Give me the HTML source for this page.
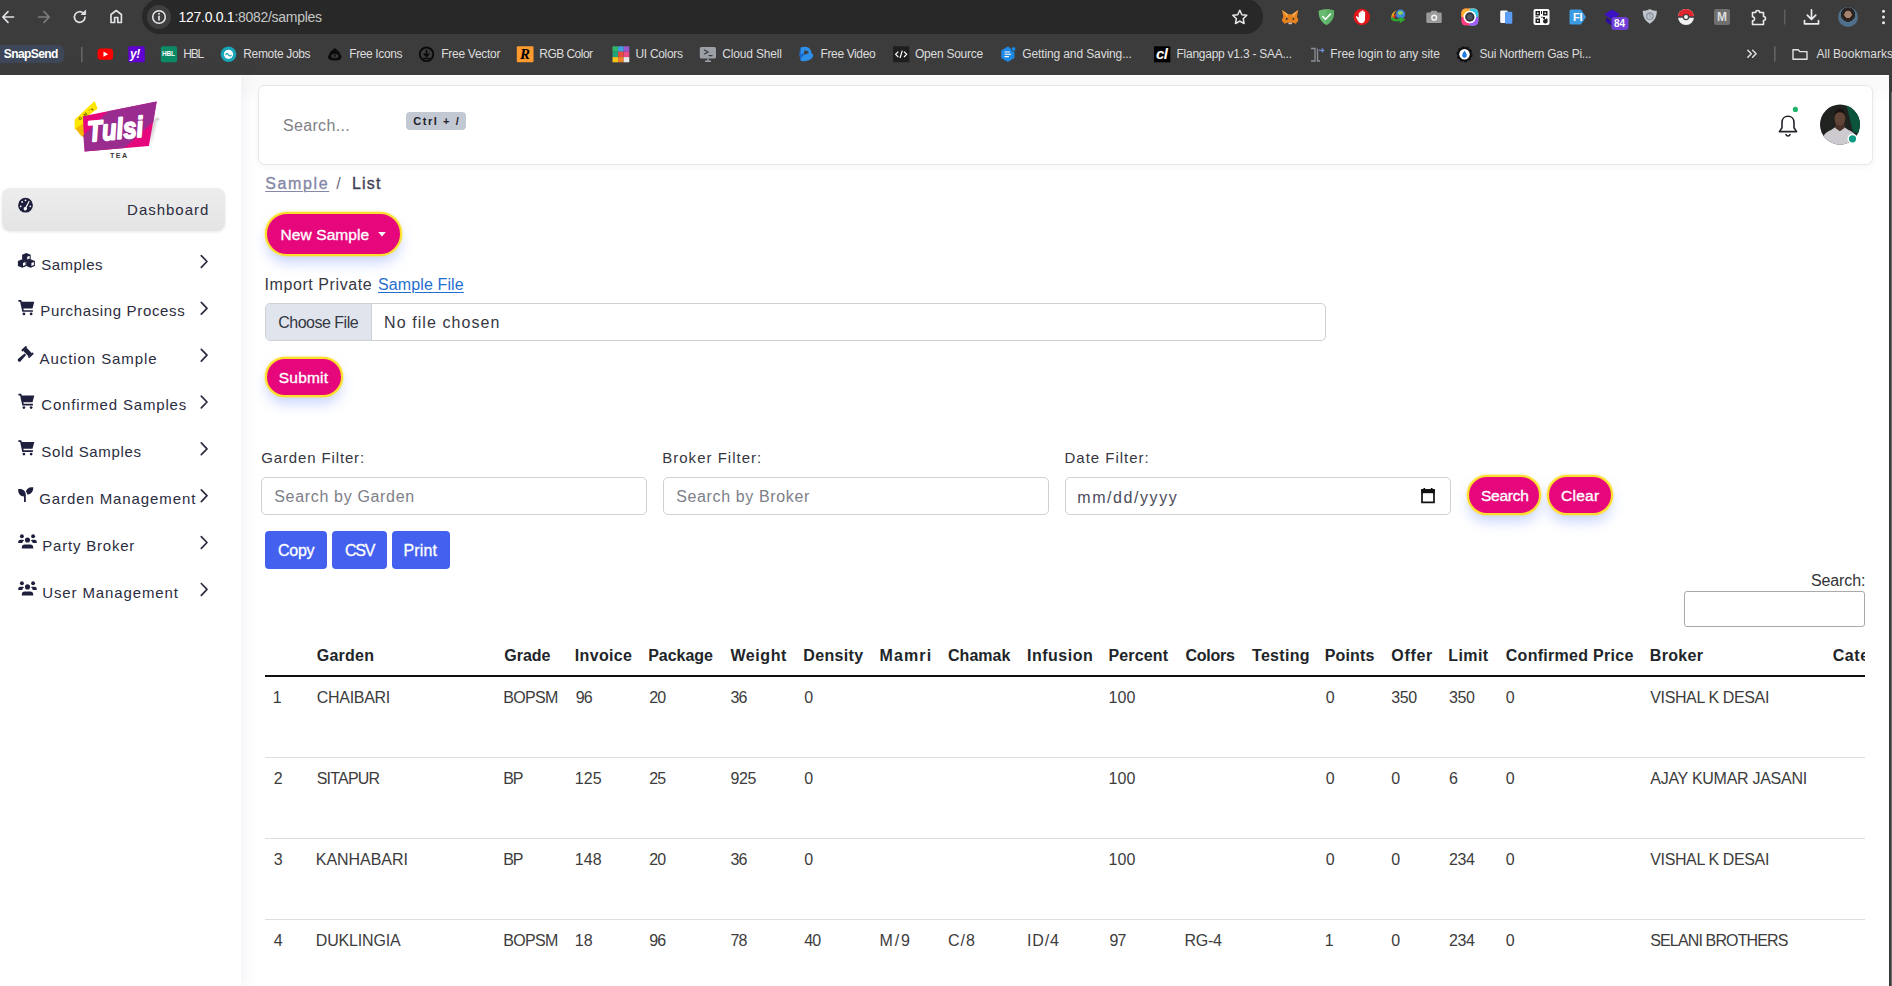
<!DOCTYPE html>
<html lang="en">
<head>
<meta charset="utf-8">
<title>Samples</title>
<style>
*{box-sizing:border-box;margin:0;padding:0}
html,body{width:1892px;height:986px;overflow:hidden;background:#fff}
body{font-family:"Liberation Sans",sans-serif;position:relative}
.a{position:absolute}
.t{position:absolute;white-space:nowrap;line-height:1;font-family:"Liberation Sans",sans-serif}
#chrome{left:0;top:0;width:1892px;height:75px;background:#3c3c3c}
#omni{left:142px;top:-1px;width:1121px;height:35px;border-radius:18px;background:#282828}
#sidebar{left:0;top:75px;width:241px;height:911px;background:#fff;box-shadow:3px 0 14px rgba(60,60,120,.07)}
#main{left:241px;top:75px;width:1648px;height:911px;background:#fff}
#topshade{left:241px;top:76px;width:1648px;height:28px;background:linear-gradient(#fafafa,#fafafa 35%,#fff)}
#sbar{left:1889px;top:75px;width:3px;height:911px;background:#3a3a3a}
#sthumb{left:1890.700px;top:91.500px;width:1.300px;height:895px;background:#6c6c6c}
#hdr{left:258px;top:85px;width:1615px;height:80px;background:#fff;border:1px solid #e7e7ec;border-radius:7px;box-shadow:0 2px 6px rgba(60,60,100,.05)}
.pill{position:absolute;background:#e6077d;border:2px solid #fbdf2c;border-radius:24px;box-shadow:0 0 1.500px .5px rgba(255,226,60,.75),0 8px 14px -2px rgba(95,130,255,.36)}
.inp{position:absolute;background:#fff;border:1px solid #ced0d4;border-radius:5px}
.bbtn{position:absolute;background:#4361ee;border-radius:4px}
.hl{position:absolute;height:1px;background:#dedede;left:265px;width:1600px}
#tclip{left:265px;top:630px;width:1600px;height:356px;overflow:hidden}
#tclip .t{margin-left:-265px;margin-top:-630px}
</style>
</head>
<body>
<!-- ============ browser chrome ============ -->
<div id="chrome" class="a">
<div id="omni" class="a"></div>
<div class="a" style="left:147px;top:5px;width:24px;height:24px;border-radius:12px;background:#3f3f3f"></div>
<svg class="a" style="left:0;top:0" width="1892" height="75" viewBox="0 0 1892 75" fill="none" stroke-linecap="round" stroke-linejoin="round">
 <!-- back -->
 <path d="M13.5 17H3M8 11.7 2.8 17 8 22.3" stroke="#dfe1e5" stroke-width="1.7"/>
 <!-- forward (disabled) -->
 <path d="M38.5 17H49M44 11.7 49.2 17 44 22.3" stroke="#7d7d7d" stroke-width="1.7"/>
 <!-- reload -->
 <path d="M85 17a5.3 5.3 0 1 1-1.6-3.8" stroke="#dfe1e5" stroke-width="1.7"/>
 <path d="M85.6 10.6v3.9h-3.9z" fill="#dfe1e5" stroke="#dfe1e5" stroke-width="1"/>
 <!-- home -->
 <path d="M111 22.5v-8l5.2-4 5.2 4v8h-3.6v-5h-3.2v5z" stroke="#dfe1e5" stroke-width="1.7"/>
 <!-- info -->
 <circle cx="159" cy="17" r="6.3" stroke="#e8eaed" stroke-width="1.5"/>
 <path d="M159 16.3v3.6" stroke="#e8eaed" stroke-width="1.6"/><circle cx="159" cy="13.7" r=".95" fill="#e8eaed"/>
 <!-- star -->
 <path d="M1239.8 10.2l2.1 4.5 4.9.6-3.6 3.4.9 4.8-4.3-2.4-4.3 2.4.9-4.8-3.6-3.4 4.9-.6z" stroke="#e8eaed" stroke-width="1.5"/>
 <!-- metamask fox -->
 <g stroke="none">
 <path d="M1282 10l6 4.2h4.2l6-4.2-1.2 6.4 1.4 4-2.6 3.4-3.6-1.2h-4.2l-3.6 1.2-2.6-3.4 1.4-4z" fill="#e8821e"/>
 <path d="M1286.5 17.5l1.8 1.8-2.6.6zM1293.7 17.5l-1.8 1.8 2.6.6z" fill="#233447"/>
 <path d="M1288.2 22.6h4l-.4 1.6h-3.2z" fill="#d7c1b3"/>
 <path d="M1282 10l6 4.2-1 3zM1298.200 10l-6 4.200 1 3z" fill="#f6a94e"/>
 <!-- green shield -->
 <path d="M1326.400 9.200c3 0 5.600.5 7.700 1.500.3 6.800-2.200 11.400-7.700 14.400-5.500-3-8-7.600-7.700-14.400 2.100-1 4.700-1.500 7.700-1.500z" fill="#68bc71"/>
 <path d="M1326.400 9.200c3 0 5.600.5 7.700 1.500.3 6.800-2.200 11.400-7.700 14.400z" fill="#5daf66"/>
 <path d="M1322.700 16.500l2.800 2.800 5-5.300" stroke="#fff" stroke-width="1.600" fill="none"/>
 <!-- red stop hand -->
 <circle cx="1361.800" cy="17" r="8.300" fill="#e0161b"/>
 <path d="M1358.700 17.500v-4.300a.8.800 0 0 1 1.600 0v-1.500a.8.800 0 0 1 1.600 0v-.6a.8.800 0 0 1 1.600 0v1.200a.8.800 0 0 1 1.600 0v6.500c0 3-1.500 4.400-3.600 4.400-1.700 0-2.700-.8-3.600-2.400l-1.800-3.400c-.4-.8.500-1.500 1.200-.8z" fill="#fff"/>
 <!-- IDM globe -->
 <circle cx="1400.500" cy="14.300" r="4.700" fill="#3f86d8"/>
 <path d="M1398 11.800c1.500-1 3.500-1 4.500 0s.3 2.300-1.200 2.700-3.300.3-3.300-1z" fill="#8ccf5a"/>
 <path d="M1391.500 18.500c-.8-3.500 1.500-7 5-8-2.500 2-3.300 5-2 8z" fill="#e8a317"/>
 <path d="M1390.800 19c2.500 2.600 6 3 9.200 2l-.6 2.500 6.300-4.300-6.800-2.500.3 2c-2.700.9-5.400.4-6.900-2.200z" fill="#2fa62c"/>
 <path d="M1392.500 17.300c1-2.300 3-3.300 5.200-3.300-1.700 1-2.700 2.500-2.900 4.300z" fill="#d6372c"/>
 <!-- camera -->
 <path d="M1427.500 12.500h2.800l1.300-1.800h4.800l1.300 1.800h2.800a1.200 1.200 0 0 1 1.200 1.200v8.100a1.200 1.200 0 0 1-1.200 1.200h-13a1.200 1.200 0 0 1-1.200-1.200v-8.100a1.200 1.200 0 0 1 1.200-1.200z" fill="#9b9b9b"/>
 <circle cx="1434.200" cy="17.700" r="3.100" fill="#f4f4f4"/><circle cx="1434.200" cy="17.700" r="1.600" fill="#9b9b9b"/>
 <!-- colour ring -->
 <rect x="1461.300" y="8.500" width="17" height="17" rx="4.500" fill="#ff3d7f"/>
 <path d="M1461.300 17v-4a4.500 4.500 0 0 1 4.500-4.500h8a4.500 4.500 0 0 1 4.500 4.500v4z" fill="#ffb02e"/>
 <path d="M1469.800 8.500h4a4.500 4.500 0 0 1 4.500 4.500v8a4.500 4.500 0 0 1-4.500 4.500h-4z" fill="#35c7e8"/>
 <path d="M1469.800 17h8.500v4a4.500 4.500 0 0 1-4.500 4.500h-4z" fill="#a259ff"/>
 <circle cx="1469.800" cy="17" r="6.300" fill="#fff"/><circle cx="1469.800" cy="17" r="4.700" fill="#2d3138"/><circle cx="1469.800" cy="17" r="3" fill="#4b535e"/>
 <!-- docs -->
 <rect x="1500.200" y="10.500" width="7.600" height="12.600" rx="1.300" fill="#f7f9fc"/>
 <rect x="1505" y="11.800" width="7.300" height="12" rx="1.300" fill="#5b9cf5"/>
 <!-- QR -->
 <rect x="1533.500" y="9" width="16" height="16" rx="2" fill="#fff"/>
 <path d="M1535.500 11h4.500v4.500h-4.500zM1543 11h4.500v4.500h-4.500zM1535.500 18.500h4.500v4.500h-4.500z" fill="#222"/>
 <path d="M1537 12.500h1.500v1.500h-1.500zM1544.500 12.500h1.500v1.500h-1.500zM1537 20h1.500v1.500h-1.500z" fill="#fff"/>
 <path d="M1541 11h1v3h-1zM1543 17h2v2h-2zM1546 18.500h1.500v2h-1.500zM1541.500 16.500h1v1.500h-1zM1535.500 16.300h3v1h-3z" fill="#222"/>
 <circle cx="1545.300" cy="21.300" r="2.300" fill="#222"/>
 <!-- FI -->
 <path d="M1571 9.500h10l5 7.500-5 7.500h-10a1.500 1.500 0 0 1-1.500-1.500v-12a1.500 1.500 0 0 1 1.500-1.500z" fill="#3b9be3"/>
 <!-- purple + badge -->
 <path d="M1604 14.500l8-5 8 5-8 5z" fill="#3a12c2"/><path d="M1606 17.500v4.500l6 3.500 6-3.500v-4.500l-6 3.700z" fill="#2c0c9c"/>
 <rect x="1611.500" y="17" width="17" height="13" rx="3" fill="#6f3fd6"/>
 <!-- grey shield -->
 <path d="M1649.800 9c2.700 1.500 4.800 1.800 7 1.800 0 6.200-2.200 10.200-7 12.900-4.800-2.700-7-6.700-7-12.900 2.200 0 4.300-.3 7-1.800z" fill="#c2c6ce"/>
 <circle cx="1649.800" cy="16.200" r="3.200" fill="none" stroke="#8e95a1" stroke-width="1.300"/><path d="M1649.800 14.500v1.900l1.200.8" stroke="#8e95a1" stroke-width="1" fill="none"/>
 <!-- pokeball -->
 <circle cx="1686" cy="17" r="8" fill="#f2f2f2"/>
 <path d="M1678 17a8 8 0 0 1 16 0z" fill="#e3262e"/>
 <rect x="1678" y="16.200" width="16" height="1.600" fill="#444"/>
 <circle cx="1686" cy="17" r="2.600" fill="#f2f2f2" stroke="#444" stroke-width="1.200"/>
 <!-- M -->
 <rect x="1714" y="9" width="16" height="16" rx="2" fill="#707070"/>
 </g>
 <!-- puzzle -->
 <path d="M1752.500 12.500h3.200a2 2 0 1 1 4 0h3.800v4a2 2 0 1 1 0 4v4h-11v-3.600a2.100 2.100 0 1 0 0-4.200z" stroke="#e8eaed" stroke-width="1.600"/>
 <!-- separators -->
 <path d="M1784.700 10v14" stroke="#5f5f5f" stroke-width="1.400"/>
 <path d="M81.800 47.500v14M1774.800 47v14" stroke="#6b6b6b" stroke-width="1.400"/>
 <!-- download -->
 <path d="M1811.500 9.800v9.200M1807.300 15.200l4.200 4.200 4.200-4.200M1804.500 20.500v3.300h14v-3.300" stroke="#e8eaed" stroke-width="1.700"/>
 <!-- menu dots -->
 <g fill="#e8eaed" stroke="none"><circle cx="1883.500" cy="11.300" r="1.500"/><circle cx="1883.500" cy="17" r="1.500"/><circle cx="1883.500" cy="22.700" r="1.500"/></g>
 <!-- bookmarks overflow -->
 <path d="M1747.800 50.300l3.500 3.500-3.500 3.500M1752.600 50.300l3.500 3.500-3.500 3.500" stroke="#e3e3e3" stroke-width="1.400"/>
 <!-- folder -->
 <path d="M1793 49.800h5.200l1.600 1.800h7.200v7.600h-14z" stroke="#e3e3e3" stroke-width="1.400"/>
</svg>
<!-- avatar in toolbar -->
<div class="a" style="left:1838px;top:7px;width:20px;height:20px;border-radius:10px;overflow:hidden;background:radial-gradient(circle at 50% 38%,#a9826b 0 22%,#2a2523 24% 44%,#4f6f8a 46% 100%)"></div>
<div class="t" style="left:1717px;top:11px;font-size:12px;font-weight:700;color:#dedede">M</div>
<div class="t" style="left:1573px;top:11.500px;font-size:11px;font-weight:700;color:#fff;letter-spacing:-.3px">FI</div>
<div class="t" style="left:1614px;top:18.500px;font-size:10px;font-weight:700;color:#fff">84</div>
<!-- bookmark chip -->
<div class="a" style="left:-6px;top:45px;width:70px;height:18px;border-radius:6px;background:#3e4759"></div>
<!-- bookmark favicons -->
<svg class="a" style="left:0;top:40px" width="1892" height="30" viewBox="0 40 1892 30">
 <rect x="97.500" y="48.600" width="15.600" height="11.200" rx="3.400" fill="#f00"/><path d="M103.500 51.600l4.600 2.600-4.600 2.600z" fill="#fff"/>
 <rect x="128.300" y="46.300" width="16.500" height="16" rx="1.500" fill="#5f01d1"/>
 <rect x="160.800" y="46.300" width="16.300" height="16" rx="2" fill="#0b8a66"/>
 <circle cx="228.500" cy="54.300" r="7.800" fill="#18a5b8"/><circle cx="228.500" cy="54.300" r="4.600" fill="#fff"/><path d="M225.500 54.800c1-1.500 2-1.500 3 0s2 1.500 3 0" stroke="#18a5b8" stroke-width="1.200" fill="none"/>
 <path d="M334.800 48l4.200 3.400 2.400 4.800c.6 2.600-1.600 4.400-6.600 4.400s-7.200-1.800-6.600-4.400l2.400-4.800z" fill="#0c0c0c"/><ellipse cx="334.800" cy="56" rx="3.600" ry="2" fill="#3c3c3c"/><circle cx="334.800" cy="55.800" r="1.100" fill="#0c0c0c"/>
 <circle cx="426.500" cy="54.300" r="6.800" fill="none" stroke="#0a0a0a" stroke-width="1.900"/><path d="M426.500 50v6M423.800 53.700l2.700 2.700 2.700-2.700M423 58.500h7" stroke="#0a0a0a" stroke-width="1.700" fill="none"/>
 <rect x="516.800" y="46.300" width="16.700" height="16" rx="1" fill="#ff9a2e"/>
 <g><rect x="612.500" y="46.300" width="5.600" height="5.400" fill="#2fb56a"/><rect x="618.100" y="46.300" width="5.600" height="5.400" fill="#3fa0e8"/><rect x="623.700" y="46.300" width="5.600" height="5.400" fill="#9b59d0"/>
 <rect x="612.500" y="51.700" width="5.600" height="5.400" fill="#1fa37a"/><rect x="618.100" y="51.700" width="5.600" height="5.400" fill="#e74c3c"/><rect x="623.700" y="51.700" width="5.600" height="5.400" fill="#e84a8a"/>
 <rect x="612.500" y="57.100" width="5.600" height="5.200" fill="#f6c21c"/><rect x="618.100" y="57.100" width="5.600" height="5.200" fill="#f0812a"/><rect x="623.700" y="57.100" width="5.600" height="5.200" fill="#e8e8e8"/></g>
 <rect x="699.800" y="47" width="16.200" height="11.600" rx="1.500" fill="#9aa0a6"/><path d="M704 49.800l4 2.200-4 2.200M708.500 55.700h4" stroke="#3c3c3c" stroke-width="1.300" fill="none"/><path d="M705 61.300h6M708 58.600v2.700" stroke="#9aa0a6" stroke-width="1.400"/>
 <path d="M801 47.300c6.500-1.800 10.500 1.200 10.300 5.600 2.800 1 2.600 4.700-1.600 6.900-3 1.600-6.700 1.900-8.900.9-1.600-4.300-1.700-9.300.2-13.400z" fill="#2f8fe8"/><path d="M801 47.300c-1.900 4.100-1.800 9.100-.2 13.400 0-3.200 2.100-5.800 6.200-7.300-3-1-5.200.3-6.300 1.500z" fill="#1668c9"/><path d="M804.300 50.600c2.600-.4 4.300.8 4.300 2.600l-4.600 1.200z" fill="#3c3c3c"/>
 <rect x="893" y="46.300" width="16.300" height="16" rx="1" fill="#1e1e1e"/><path d="M898.300 51.600l-2.700 2.700 2.700 2.700M904 51.600l2.700 2.700-2.700 2.700M902.300 50.600l-2.300 7.400" stroke="#fff" stroke-width="1.200" fill="none"/>
 <path d="M1007.800 46.600l6.600 3.800v7.700l-6.600 3.800-6.600-3.800v-7.700z" fill="#1e88e5"/><path d="M1004.500 52h5.500M1004.500 54.300h6.600M1004.500 56.600h4.400" stroke="#fff" stroke-width="1.100"/><circle cx="1013.600" cy="49" r="2.300" fill="#1e88e5" stroke="#3c3c3c" stroke-width=".8"/>
 <rect x="1154" y="46.300" width="16.300" height="16" fill="#000"/>
 <path d="M1311 48.500h4v12.500h-4M1317.500 48.500v12.500h2.500" stroke="#8a8f98" stroke-width="1.300" fill="none"/><path d="M1319 50.300h4.500M1321.700 48.300l2 2-2 2" stroke="#6f8fd0" stroke-width="1.200" fill="none"/>
 <circle cx="1464.500" cy="54.300" r="7.300" fill="#111" stroke="#111" stroke-width="1.600" stroke-dasharray="2.600 1.900"/><circle cx="1464.500" cy="54.300" r="5.200" fill="#fff"/><path d="M1464.500 50.500c1.800 2.500 2.300 3.800 2.300 5a2.300 2.300 0 0 1-4.600 0c0-1.200.5-2.500 2.300-5z" fill="#1f7ae0"/>
</svg>
<div class="t" style="left:130px;top:48px;font-size:12px;font-weight:700;font-style:italic;color:#fff;letter-spacing:-.5px">y!</div>
<div class="t" style="left:162px;top:51px;font-size:6.500px;font-weight:700;color:#fff;letter-spacing:-.2px">HBL</div>
<div class="t" style="left:520px;top:46.500px;font-size:15px;font-weight:700;font-style:italic;color:#000;font-family:'Liberation Serif',serif">R</div>
<div class="t" style="left:1156px;top:46px;font-size:15px;font-weight:700;font-style:italic;color:#fff;letter-spacing:-.6px">cl</div>
</div>
<!-- ============ page ============ -->
<div id="main" class="a"></div>
<div id="topshade" class="a"></div>
<div id="sidebar" class="a"></div>
<div id="sbar" class="a"></div><div id="sthumb" class="a"></div>

<!-- logo -->
<svg class="a" style="left:60px;top:90px" width="120" height="80" viewBox="60 90 120 80">
 <defs><filter id="ls" x="-20%" y="-20%" width="150%" height="150%"><feGaussianBlur stdDeviation="1.6"/></filter></defs>
 <path d="M150 122l8-6-8 30z" fill="#000" opacity=".18" filter="url(#ls)"/>
 <path d="M74.700 119.500L94.600 101 97.600 108.500 84 119 84 128 74.700 129.500z" fill="#ffe600"/>
 <path d="M75.500 128.800L84 123 84.500 137 81.500 136.300z" fill="#f2b600"/>
 <path d="M82.900 116.300L156.700 101.500 148.900 146.100 84.700 151.400z" fill="#e6077d"/>
 <path d="M108.100 111.300L156.700 101.500 153.400 121.500 124.500 148.100 84.700 151.400 83.300 135.500z" fill="#9a2b8f"/>
 <text x="88.600" y="141.800" transform="rotate(-5.400 88.600 141.800)" font-family="Liberation Sans, sans-serif" font-weight="700" font-style="italic" font-size="29" fill="#fff" stroke="#fff" stroke-width="1.800" stroke-linejoin="round" textLength="55.500" lengthAdjust="spacingAndGlyphs">Tulsi</text>
 <text x="109.900" y="158.300" font-family="Liberation Sans, sans-serif" font-weight="700" font-size="7.200" fill="#3a3a3a" textLength="17.200" lengthAdjust="spacing">TEA</text>
 <text x="79.800" y="120.600" transform="rotate(-38 79.800 120.600)" font-family="Liberation Sans, sans-serif" font-weight="700" font-size="4.400" fill="#5c5200" letter-spacing=".9">G.M.'s</text>
 <text x="156.200" y="120.600" font-family="Liberation Sans, sans-serif" font-size="4.200" fill="#888">®</text>
</svg>

<!-- dashboard item -->
<div class="a" style="left:2px;top:187.500px;width:223px;height:43px;border-radius:8px;background:linear-gradient(#ededed,#e4e4e4);box-shadow:0 1px 3px rgba(0,0,0,.10)"></div>

<!-- sidebar icons + chevrons -->
<svg class="a" style="left:0;top:180px" width="241" height="440" viewBox="0 180 241 440" fill="#1e1f3d">
 <!-- gauge -->
 <circle cx="25.500" cy="205.200" r="7.400"/>
 <g fill="#fff"><circle cx="20.700" cy="206.300" r=".9"/><circle cx="22.200" cy="201.900" r=".9"/><circle cx="25.500" cy="200.300" r=".9"/><circle cx="30.300" cy="206.300" r=".9"/>
 <path d="M28.800 200.800l.9.500-3 6.300a1.700 1.700 0 1 1-1.300-.7z"/></g>
 <!-- cubes -->
 <g id="cubes">
 <path d="M26.400 253l4.300 1.700v4.900l-4.300 1.800-4.300-1.800v-4.900z"/>
 <path d="M22.200 259.300l4.300 1.700v4.900l-4.300 1.800-4.300-1.800v-4.900z"/>
 <path d="M30.600 259.300l4.300 1.700v4.900l-4.300 1.800-4.300-1.800v-4.900z"/>
 <g fill="#fff"><path d="M27.200 256.800l2.500-1v2.800l-2.500 1zM23 263.100l2.500-1v2.800l-2.500 1zM31.400 263.100l2.500-1v2.800l-2.500 1z"/></g>
 </g>
 <!-- carts -->
 <defs><g id="cart"><path d="M0 0h2.700l.5 1.600h11.800l-1.700 6.400H4.700l.3 1.500h8.700v1.500H3.700L1.600 1.500H0z"/><circle cx="5.200" cy="13" r="1.300"/><circle cx="12" cy="13" r="1.300"/></g>
 <g id="chev"><path d="M0 0l5.700 5.900L0 11.800" fill="none" stroke="#2b2c40" stroke-width="1.700" stroke-linecap="round" stroke-linejoin="round"/></g>
 <g id="users"><circle cx="3.700" cy="2" r="1.950"/><circle cx="14.900" cy="2" r="1.950"/><circle cx="9.300" cy="5.700" r="2.550"/>
 <path d="M0 8.700v-.9a2.300 2.300 0 0 1 2.300-2.300h2.100a2.200 2.200 0 0 1 1.500.6 4.400 4.400 0 0 0-1.900 2.600zM18.600 8.700v-.9a2.300 2.300 0 0 0-2.300-2.300h-2.100a2.200 2.200 0 0 0-1.500.6 4.400 4.400 0 0 1 1.900 2.600z"/>
 <path d="M3.600 14.200v-1a3 3 0 0 1 3-3h5.400a3 3 0 0 1 3 3v1z"/></g></defs>
 <use href="#cart" transform="translate(18.400 300.100) scale(1.060)"/>
 <use href="#cart" transform="translate(18.400 393.800) scale(1.060)"/>
 <use href="#cart" transform="translate(18.400 440.300) scale(1.060)"/>
 <!-- gavel -->
 <g transform="translate(27.500 352) rotate(45)"><rect x="-3.900" y="-2.300" width="7.800" height="4.600"/><rect x="-5.700" y="-3.300" width="2" height="6.600" rx=".7"/><rect x="3.700" y="-3.300" width="2" height="6.600" rx=".7"/><path d="M-1 3.100h2l.7 8.300a1.700 1.700 0 0 1-3.400 0z"/></g>
 <!-- seedling -->
 <g transform="translate(18.200 487.300)"><path d="M0 1.800h1.800c3.200 0 5.600 2.300 5.800 5.400V14.800H5.800V9.200C2.500 9.100 0 6.500 0 3.200z"/><path d="M15 0h-1.700c-2.700 0-4.900 1.700-5.600 4.100.8.900 1.300 2 1.500 3.200 3.200-.2 5.800-2.800 5.800-6.100z"/></g>
 <!-- users -->
 <use href="#users" x="18.200" y="534.300"/>
 <use href="#users" x="18.200" y="581.200"/>
 <!-- chevrons -->
 <use href="#chev" x="201.300" y="255.600"/><use href="#chev" x="201.300" y="302.400"/><use href="#chev" x="201.300" y="349.300"/><use href="#chev" x="201.300" y="396.100"/>
 <use href="#chev" x="201.300" y="442.900"/><use href="#chev" x="201.300" y="489.800"/><use href="#chev" x="201.300" y="536.600"/><use href="#chev" x="201.300" y="583.500"/>
</svg>

<!-- header card -->
<div id="hdr" class="a"></div>
<div class="a" style="left:406px;top:112px;width:60px;height:18px;border-radius:4px;background:#c3c9d2"></div>
<svg class="a" style="left:1770px;top:100px" width="100" height="50" viewBox="1770 100 100 50">
 <path d="M1788 116.200c-3.600 0-6 2.700-6 6.200v5.300l-2.600 3.900h17.200l-2.600-3.900v-5.300c0-3.500-2.400-6.200-6-6.200z" fill="none" stroke="#23232b" stroke-width="1.600" stroke-linejoin="round"/>
 <path d="M1786 134.600a2.100 2.100 0 0 0 4 0" fill="none" stroke="#23232b" stroke-width="1.600" stroke-linecap="round"/>
 <circle cx="1795.400" cy="109.400" r="2.600" fill="#1fb36b"/>
 <defs><clipPath id="av"><circle cx="1840" cy="124.600" r="20"/></clipPath></defs>
 <g clip-path="url(#av)">
  <rect x="1820" y="104" width="40" height="42" fill="#20221f"/>
  <path d="M1846 104h14v30l-7-2c-2-8-4-18-7-28z" fill="#0b553c"/>
  <path d="M1821 146c0-8 3.500-13.500 10-16l4.500-3h8.500l4.500 3c6.500 2.500 10 8 10 16z" fill="#cdcbcf"/>
  <path d="M1835.300 122h9.200v6l-4.600 3.200-4.600-3.200z" fill="#4a3229"/>
  <ellipse cx="1839.900" cy="118.300" rx="5.400" ry="7.400" fill="#634538"/>
  <path d="M1834.300 116.500c-.3-5 2.300-8 5.600-8s5.900 3 5.600 8c-1.300-3-2.800-4.200-5.600-4.200s-4.300 1.200-5.600 4.200z" fill="#1a1310"/>
 </g>
 <circle cx="1852.500" cy="138.800" r="5" fill="#fff"/><circle cx="1852.500" cy="138.800" r="3.600" fill="#0e9b85"/>
</svg>

<!-- pink pills -->
<div class="pill" style="left:265.200px;top:212px;width:136.800px;height:44.300px"></div>
<svg class="a" style="left:378px;top:231.500px" width="8" height="5" viewBox="0 0 8 5"><path d="M.2 0h7.600L4 4.500z" fill="#fff"/></svg>
<div class="pill" style="left:265.200px;top:357.300px;width:77.400px;height:39.800px"></div>
<div class="pill" style="left:1467.200px;top:475.200px;width:74.300px;height:39.500px"></div>
<div class="pill" style="left:1547.200px;top:475.200px;width:65.500px;height:39.500px"></div>

<!-- file input -->
<div class="inp" style="left:265px;top:303.400px;width:1060.500px;height:37.400px;overflow:hidden"><div class="a" style="left:0;top:0;width:106px;height:38px;background:#dfe4ed;border-right:1px solid #ced0d4"></div></div>

<!-- filter inputs -->
<div class="inp" style="left:261px;top:477.400px;width:385.800px;height:37.400px"></div>
<div class="inp" style="left:663px;top:477.400px;width:385.800px;height:37.400px"></div>
<div class="inp" style="left:1065px;top:477.400px;width:385.800px;height:37.400px"></div>
<svg class="a" style="left:1420px;top:487px" width="16" height="17" viewBox="0 0 16 17"><path d="M2 3h12v12.300H2z" fill="none" stroke="#111" stroke-width="1.700"/><path d="M1.200 2.200h13.600v4H1.200z" fill="#111"/><path d="M4.300 1v2M11.700 1v2" stroke="#111" stroke-width="1.700"/></svg>

<!-- datatable buttons -->
<div class="bbtn" style="left:265px;top:531.200px;width:62px;height:37.500px"></div>
<div class="bbtn" style="left:332px;top:531.200px;width:55px;height:37.500px"></div>
<div class="bbtn" style="left:392px;top:531.200px;width:58px;height:37.500px"></div>
<div class="a" style="left:1684px;top:591.300px;width:180.800px;height:35.500px;border:1px solid #aaa;border-radius:3px;background:#fff"></div>

<!-- table lines -->
<div class="a" style="left:265px;top:675px;width:1600px;height:2px;background:#111"></div>
<div class="hl" style="top:757px"></div><div class="hl" style="top:838px"></div><div class="hl" style="top:919px"></div>

<!-- ============ text ============ -->
<span class="t" style="left:178.5px;top:10px;font-size:14px;color:#c4c7c5;letter-spacing:-0.28px;"><span style="color:#fff">127.0.0.1</span>:8082/samples</span>
<span class="t" style="left:3.75px;top:48px;font-size:12px;color:#ffffff;font-weight:700;letter-spacing:-0.59px;">SnapSend</span>
<span class="t" style="left:183.25px;top:48px;font-size:12px;color:#dcdcdc;letter-spacing:-1.2px;">HBL</span>
<span class="t" style="left:243.25px;top:48px;font-size:12px;color:#dcdcdc;letter-spacing:-0.34px;">Remote Jobs</span>
<span class="t" style="left:349.25px;top:48px;font-size:12px;color:#dcdcdc;letter-spacing:-0.38px;">Free Icons</span>
<span class="t" style="left:441.25px;top:48px;font-size:12px;color:#dcdcdc;letter-spacing:-0.28px;">Free Vector</span>
<span class="t" style="left:539.25px;top:48px;font-size:12px;color:#dcdcdc;letter-spacing:-0.53px;">RGB Color</span>
<span class="t" style="left:635.5px;top:48px;font-size:12px;color:#dcdcdc;letter-spacing:-0.31px;">UI Colors</span>
<span class="t" style="left:722.25px;top:48px;font-size:12px;color:#dcdcdc;letter-spacing:-0.17px;">Cloud Shell</span>
<span class="t" style="left:820.5px;top:48px;font-size:12px;color:#dcdcdc;letter-spacing:-0.37px;">Free Video</span>
<span class="t" style="left:915px;top:48px;font-size:12px;color:#dcdcdc;letter-spacing:-0.25px;">Open Source</span>
<span class="t" style="left:1022.25px;top:48px;font-size:12px;color:#dcdcdc;letter-spacing:-0.12px;">Getting and Saving...</span>
<span class="t" style="left:1176.5px;top:48px;font-size:12px;color:#dcdcdc;letter-spacing:-0.25px;">Flangapp v1.3 - SAA...</span>
<span class="t" style="left:1330.25px;top:48px;font-size:12px;color:#dcdcdc;letter-spacing:-0.08px;">Free login to any site</span>
<span class="t" style="left:1479.5px;top:48px;font-size:12px;color:#dcdcdc;letter-spacing:-0.23px;">Sui Northern Gas Pi...</span>
<span class="t" style="left:1816.5px;top:48px;font-size:12px;color:#dcdcdc;letter-spacing:-0.02px;">All Bookmarks</span>
<span class="t" style="left:127.1px;top:202px;font-size:15px;color:#2b2c40;letter-spacing:0.98px;">Dashboard</span>
<span class="t" style="left:41.25px;top:257px;font-size:15px;color:#2b2c40;letter-spacing:0.48px;">Samples</span>
<span class="t" style="left:40.25px;top:303px;font-size:15px;color:#2b2c40;letter-spacing:0.65px;">Purchasing Process</span>
<span class="t" style="left:39.5px;top:351px;font-size:15px;color:#2b2c40;letter-spacing:0.93px;">Auction Sample</span>
<span class="t" style="left:41.25px;top:397px;font-size:15px;color:#2b2c40;letter-spacing:0.83px;">Confirmed Samples</span>
<span class="t" style="left:41.25px;top:444px;font-size:15px;color:#2b2c40;letter-spacing:0.65px;">Sold Samples</span>
<span class="t" style="left:39.2px;top:491px;font-size:15px;color:#2b2c40;letter-spacing:0.9px;">Garden Management</span>
<span class="t" style="left:42.2px;top:538px;font-size:15px;color:#2b2c40;letter-spacing:0.8px;">Party Broker</span>
<span class="t" style="left:42.2px;top:585px;font-size:15px;color:#2b2c40;letter-spacing:0.88px;">User Management</span>
<span class="t" style="left:283px;top:118px;font-size:16px;color:#808086;letter-spacing:0.33px;">Search...</span>
<span class="t" style="left:413.25px;top:116px;font-size:11px;color:#1e1e2d;font-weight:700;letter-spacing:1.57px;">Ctrl + /</span>
<span class="t" style="left:265.2px;top:176px;font-size:16px;color:#8588a6;letter-spacing:1.63px;text-decoration:underline;text-decoration-thickness:1px;text-underline-offset:1.5px;-webkit-text-stroke:.35px #8588a6">Sample</span>
<span class="t" style="left:336.2px;top:176px;font-size:16px;color:#6a6b80;">/</span>
<span class="t" style="left:351.9px;top:176px;font-size:16px;color:#3f4056;letter-spacing:1.22px;-webkit-text-stroke:.35px #3f4056">List</span>
<span class="t" style="left:280.6px;top:227px;font-size:15.5px;color:#fff;letter-spacing:0.08px;-webkit-text-stroke:.35px #fff">New Sample</span>
<span class="t" style="left:264.6px;top:277px;font-size:16px;color:#36373f;letter-spacing:0.57px;">Import Private</span>
<span class="t" style="left:378px;top:277px;font-size:16px;color:#1f6fd0;letter-spacing:0.12px;text-decoration:underline;text-underline-offset:2px">Sample File</span>
<span class="t" style="left:278.25px;top:315px;font-size:16px;color:#36373f;letter-spacing:-0.5px;">Choose File</span>
<span class="t" style="left:384px;top:315px;font-size:16px;color:#36373f;letter-spacing:1.08px;">No file chosen</span>
<span class="t" style="left:278.75px;top:370px;font-size:15.5px;color:#fff;letter-spacing:0.21px;-webkit-text-stroke:.35px #fff">Submit</span>
<span class="t" style="left:261.25px;top:450px;font-size:15px;color:#36373f;letter-spacing:0.86px;">Garden Filter:</span>
<span class="t" style="left:662.25px;top:450px;font-size:15px;color:#36373f;letter-spacing:1.01px;">Broker Filter:</span>
<span class="t" style="left:1064.5px;top:450px;font-size:15px;color:#36373f;letter-spacing:0.98px;">Date Filter:</span>
<span class="t" style="left:274.25px;top:489px;font-size:16px;color:#7d8088;letter-spacing:0.67px;">Search by Garden</span>
<span class="t" style="left:676.25px;top:489px;font-size:16px;color:#7d8088;letter-spacing:0.63px;">Search by Broker</span>
<span class="t" style="left:1077.25px;top:490px;font-size:16px;color:#4b4c5a;letter-spacing:1.57px;">mm/dd/yyyy</span>
<span class="t" style="left:1481px;top:488px;font-size:15.5px;color:#fff;letter-spacing:-0.25px;-webkit-text-stroke:.35px #fff">Search</span>
<span class="t" style="left:1561px;top:488px;font-size:15.5px;color:#fff;letter-spacing:0.28px;-webkit-text-stroke:.35px #fff">Clear</span>
<span class="t" style="left:278px;top:543px;font-size:16px;color:#fff;letter-spacing:-0.28px;-webkit-text-stroke:.3px #fff">Copy</span>
<span class="t" style="left:345px;top:543px;font-size:16px;color:#fff;letter-spacing:-1.2px;-webkit-text-stroke:.3px #fff">CSV</span>
<span class="t" style="left:403.5px;top:543px;font-size:16px;color:#fff;letter-spacing:0.14px;-webkit-text-stroke:.3px #fff">Print</span>
<span class="t" style="left:1811px;top:573px;font-size:16px;color:#333;letter-spacing:-0.12px;">Search:</span>
<div id="tclip" class="a">
<span class="t" style="left:316.75px;top:648px;font-size:16px;color:#212529;font-weight:700;letter-spacing:0.25px;">Garden</span>
<span class="t" style="left:504.25px;top:648px;font-size:16px;color:#212529;font-weight:700;letter-spacing:-0.02px;">Grade</span>
<span class="t" style="left:574.75px;top:648px;font-size:16px;color:#212529;font-weight:700;letter-spacing:0.34px;">Invoice</span>
<span class="t" style="left:648.25px;top:648px;font-size:16px;color:#212529;font-weight:700;letter-spacing:-0.05px;">Package</span>
<span class="t" style="left:730.5px;top:648px;font-size:16px;color:#212529;font-weight:700;letter-spacing:0.56px;">Weight</span>
<span class="t" style="left:803.25px;top:648px;font-size:16px;color:#212529;font-weight:700;letter-spacing:0.35px;">Density</span>
<span class="t" style="left:879.5px;top:648px;font-size:16px;color:#212529;font-weight:700;letter-spacing:1.14px;">Mamri</span>
<span class="t" style="left:948px;top:648px;font-size:16px;color:#212529;font-weight:700;letter-spacing:0.03px;">Chamak</span>
<span class="t" style="left:1027px;top:648px;font-size:16px;color:#212529;font-weight:700;letter-spacing:0.51px;">Infusion</span>
<span class="t" style="left:1108.5px;top:648px;font-size:16px;color:#212529;font-weight:700;letter-spacing:0.15px;">Percent</span>
<span class="t" style="left:1185.5px;top:648px;font-size:16px;color:#212529;font-weight:700;letter-spacing:-0.25px;">Colors</span>
<span class="t" style="left:1252px;top:648px;font-size:16px;color:#212529;font-weight:700;letter-spacing:0.3px;">Testing</span>
<span class="t" style="left:1324.75px;top:648px;font-size:16px;color:#212529;font-weight:700;letter-spacing:0.15px;">Points</span>
<span class="t" style="left:1391.25px;top:648px;font-size:16px;color:#212529;font-weight:700;letter-spacing:0.69px;">Offer</span>
<span class="t" style="left:1448.25px;top:648px;font-size:16px;color:#212529;font-weight:700;letter-spacing:0.4px;">Limit</span>
<span class="t" style="left:1505.75px;top:648px;font-size:16px;color:#212529;font-weight:700;letter-spacing:0.29px;">Confirmed Price</span>
<span class="t" style="left:1649.75px;top:648px;font-size:16px;color:#212529;font-weight:700;letter-spacing:0.33px;">Broker</span>
<span class="t" style="left:1832.75px;top:648px;font-size:16px;color:#212529;font-weight:700;letter-spacing:0.54px;">Category</span>
<span class="t" style="left:272.75px;top:690px;font-size:16px;color:#3c3c3c;">1</span>
<span class="t" style="left:316.75px;top:690px;font-size:16px;color:#3c3c3c;letter-spacing:-0.3px;">CHAIBARI</span>
<span class="t" style="left:503.25px;top:690px;font-size:16px;color:#3c3c3c;letter-spacing:-0.68px;">BOPSM</span>
<span class="t" style="left:575.75px;top:690px;font-size:16px;color:#3c3c3c;letter-spacing:-0.8px;">96</span>
<span class="t" style="left:649.25px;top:690px;font-size:16px;color:#3c3c3c;letter-spacing:-0.8px;">20</span>
<span class="t" style="left:730.5px;top:690px;font-size:16px;color:#3c3c3c;letter-spacing:-0.8px;">36</span>
<span class="t" style="left:804.25px;top:690px;font-size:16px;color:#3c3c3c;">0</span>
<span class="t" style="left:1108.5px;top:690px;font-size:16px;color:#3c3c3c;letter-spacing:0.1px;">100</span>
<span class="t" style="left:1325.75px;top:690px;font-size:16px;color:#3c3c3c;">0</span>
<span class="t" style="left:1391.25px;top:690px;font-size:16px;color:#3c3c3c;letter-spacing:-0.4px;">350</span>
<span class="t" style="left:1449.1px;top:690px;font-size:16px;color:#3c3c3c;letter-spacing:-0.4px;">350</span>
<span class="t" style="left:1505.75px;top:690px;font-size:16px;color:#3c3c3c;">0</span>
<span class="t" style="left:1650.25px;top:690px;font-size:16px;color:#3c3c3c;letter-spacing:-0.37px;">VISHAL K DESAI</span>
<span class="t" style="left:273.75px;top:771px;font-size:16px;color:#3c3c3c;">2</span>
<span class="t" style="left:316.75px;top:771px;font-size:16px;color:#3c3c3c;letter-spacing:-0.81px;">SITAPUR</span>
<span class="t" style="left:503.25px;top:771px;font-size:16px;color:#3c3c3c;letter-spacing:-1.2px;">BP</span>
<span class="t" style="left:574.75px;top:771px;font-size:16px;color:#3c3c3c;letter-spacing:0.1px;">125</span>
<span class="t" style="left:649.25px;top:771px;font-size:16px;color:#3c3c3c;letter-spacing:-0.8px;">25</span>
<span class="t" style="left:730.5px;top:771px;font-size:16px;color:#3c3c3c;letter-spacing:-0.4px;">925</span>
<span class="t" style="left:804.25px;top:771px;font-size:16px;color:#3c3c3c;">0</span>
<span class="t" style="left:1108.5px;top:771px;font-size:16px;color:#3c3c3c;letter-spacing:0.1px;">100</span>
<span class="t" style="left:1325.75px;top:771px;font-size:16px;color:#3c3c3c;">0</span>
<span class="t" style="left:1391.25px;top:771px;font-size:16px;color:#3c3c3c;">0</span>
<span class="t" style="left:1449.1px;top:771px;font-size:16px;color:#3c3c3c;">6</span>
<span class="t" style="left:1505.75px;top:771px;font-size:16px;color:#3c3c3c;">0</span>
<span class="t" style="left:1650.25px;top:771px;font-size:16px;color:#3c3c3c;letter-spacing:-0.27px;">AJAY KUMAR JASANI</span>
<span class="t" style="left:273.75px;top:852px;font-size:16px;color:#3c3c3c;">3</span>
<span class="t" style="left:315.75px;top:852px;font-size:16px;color:#3c3c3c;letter-spacing:-0.03px;">KANHABARI</span>
<span class="t" style="left:503.25px;top:852px;font-size:16px;color:#3c3c3c;letter-spacing:-1.2px;">BP</span>
<span class="t" style="left:574.75px;top:852px;font-size:16px;color:#3c3c3c;letter-spacing:0.1px;">148</span>
<span class="t" style="left:649.25px;top:852px;font-size:16px;color:#3c3c3c;letter-spacing:-0.8px;">20</span>
<span class="t" style="left:730.5px;top:852px;font-size:16px;color:#3c3c3c;letter-spacing:-0.8px;">36</span>
<span class="t" style="left:804.25px;top:852px;font-size:16px;color:#3c3c3c;">0</span>
<span class="t" style="left:1108.5px;top:852px;font-size:16px;color:#3c3c3c;letter-spacing:0.1px;">100</span>
<span class="t" style="left:1325.75px;top:852px;font-size:16px;color:#3c3c3c;">0</span>
<span class="t" style="left:1391.25px;top:852px;font-size:16px;color:#3c3c3c;">0</span>
<span class="t" style="left:1449.1px;top:852px;font-size:16px;color:#3c3c3c;letter-spacing:-0.4px;">234</span>
<span class="t" style="left:1505.75px;top:852px;font-size:16px;color:#3c3c3c;">0</span>
<span class="t" style="left:1650.25px;top:852px;font-size:16px;color:#3c3c3c;letter-spacing:-0.37px;">VISHAL K DESAI</span>
<span class="t" style="left:273.75px;top:933px;font-size:16px;color:#3c3c3c;">4</span>
<span class="t" style="left:315.75px;top:933px;font-size:16px;color:#3c3c3c;letter-spacing:-0.17px;">DUKLINGIA</span>
<span class="t" style="left:503.25px;top:933px;font-size:16px;color:#3c3c3c;letter-spacing:-0.68px;">BOPSM</span>
<span class="t" style="left:574.75px;top:933px;font-size:16px;color:#3c3c3c;letter-spacing:0.2px;">18</span>
<span class="t" style="left:649.25px;top:933px;font-size:16px;color:#3c3c3c;letter-spacing:-0.8px;">96</span>
<span class="t" style="left:730.5px;top:933px;font-size:16px;color:#3c3c3c;letter-spacing:-0.8px;">78</span>
<span class="t" style="left:804.25px;top:933px;font-size:16px;color:#3c3c3c;letter-spacing:-0.8px;">40</span>
<span class="t" style="left:879.5px;top:933px;font-size:16px;color:#3c3c3c;letter-spacing:1.86px;">M/9</span>
<span class="t" style="left:948px;top:933px;font-size:16px;color:#3c3c3c;letter-spacing:1px;">C/8</span>
<span class="t" style="left:1027px;top:933px;font-size:16px;color:#3c3c3c;letter-spacing:0.85px;">ID/4</span>
<span class="t" style="left:1109.5px;top:933px;font-size:16px;color:#3c3c3c;letter-spacing:-0.8px;">97</span>
<span class="t" style="left:1184.5px;top:933px;font-size:16px;color:#3c3c3c;letter-spacing:-0.28px;">RG-4</span>
<span class="t" style="left:1324.75px;top:933px;font-size:16px;color:#3c3c3c;">1</span>
<span class="t" style="left:1391.25px;top:933px;font-size:16px;color:#3c3c3c;">0</span>
<span class="t" style="left:1449.1px;top:933px;font-size:16px;color:#3c3c3c;letter-spacing:-0.4px;">234</span>
<span class="t" style="left:1505.75px;top:933px;font-size:16px;color:#3c3c3c;">0</span>
<span class="t" style="left:1650.25px;top:933px;font-size:16px;color:#3c3c3c;letter-spacing:-0.86px;">SELANI BROTHERS</span>
</div>
</body>
</html>
